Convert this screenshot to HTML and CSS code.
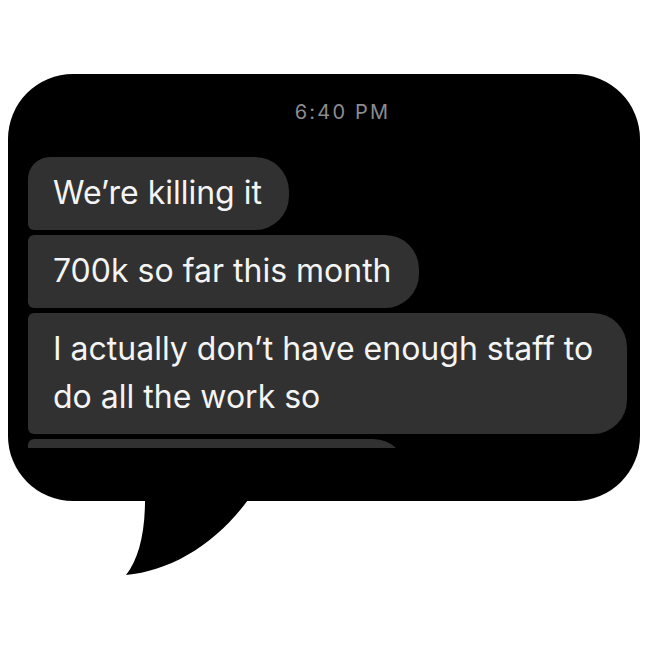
FILE: index.html
```html
<!DOCTYPE html>
<html>
<head>
    <title>6:40 PM</title>
    <meta charset="utf-8">
    <link rel="stylesheet" href="styles.css">
</head>
<body>
<div class="speech">
	<div class="stamp">6:40 PM</div>
	<div class="thread">
		<div class="msg first">We’re killing it</div>
		<div class="msg">700k so far this month</div>
		<div class="msg">I actually don’t have enough staff to do all the work so</div>
		<div class="msg cut"></div>
	</div>
</div>
<div class="tail"></div>
</body>
</html>
```

FILE: styles.css
```css
* {
	margin: 0;
	padding: 0;
	box-sizing: border-box;
}

body {
	background: #fff;
	padding: 74px 0 0 8px;
	font-family: Inter, "Liberation Sans", sans-serif;
}

.speech {
	width: 632px;
	height: 427px;
	background: #000;
	border-radius: 65px;
	padding: 26px 0 0 20px;
}

.stamp {
	color: #8c8c8f;
	font-size: 20px;
	line-height: 24px;
	letter-spacing: 2.2px;
	text-align: center;
	padding-left: 30px;
	padding-right: 13px;
}

.thread {
	margin-top: 33px;
	height: 291px;
	overflow: hidden;
	display: flex;
	flex-direction: column;
	align-items: flex-start;
	gap: 5px;
}

.msg {
	background: #313131;
	color: #f4f4f4;
	font-size: 32px;
	line-height: 48px;
	padding: 12px 27px 13px 25px;
	max-width: 599px;
	border-radius: 6px 34px 34px 6px;
	flex-shrink: 0;
}

.msg.first {
	border-top-left-radius: 22px;
}

.msg.cut {
	width: 379px;
	height: 73px;
}

/* the pointer under the balloon */
.tail {
	width: 136px;
	height: 85px;
	margin: -6px 0 0 112px;
	background: #000;
	clip-path: path("M25,0 L25,5 C25,40 18,65 6,80 C50,76 95,50 128,5 L128,0 Z");
}
```
